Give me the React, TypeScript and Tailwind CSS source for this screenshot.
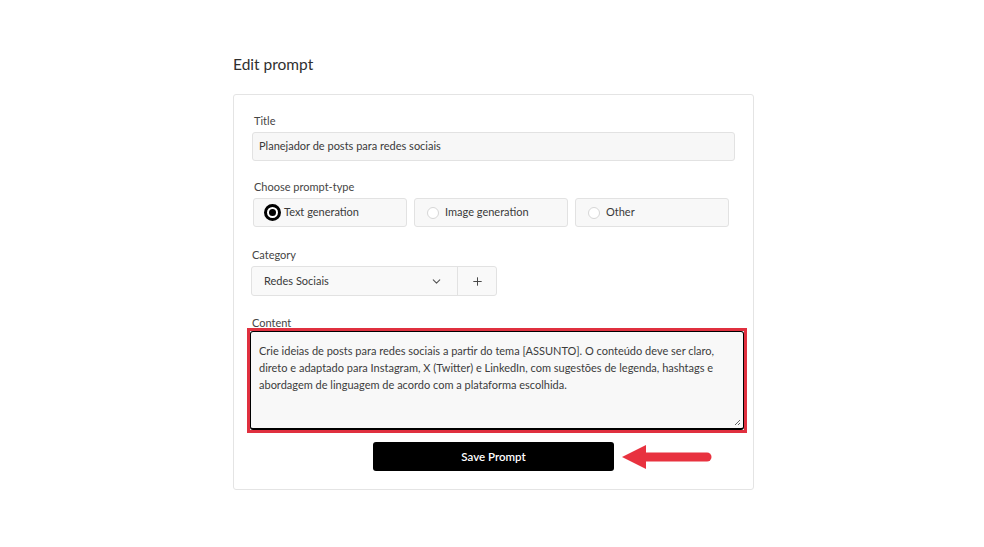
import { ChevronDown, Plus } from 'lucide-react';

const RadioOption = ({ label, selected }: { label: string; selected?: boolean }) => {
  return (
    <div className="flex h-[29px] w-[154px] items-center rounded-[3px] border border-[#e2e2e2] bg-[#f8f8f8] pl-[10px] text-[11px] text-[#3a3a3a]">
      {selected ? (
        <span className="mr-[3px] flex h-[17px] w-[17px] items-center justify-center rounded-full border-[3px] border-black bg-white">
          <span className="h-[7px] w-[7px] rounded-full bg-black" />
        </span>
      ) : (
        <span className="ml-[2px] mr-[6px] h-[12px] w-[12px] rounded-full border border-[#d6d6d6] bg-white" />
      )}
      <span>{label}</span>
    </div>
  );
};

export default function App() {
  return (
    <div className="min-h-[547px] bg-white pt-[54px] font-['Lato','Noto_Sans',sans-serif]">
      <div className="ml-[233px] w-[521px]">
        <h1 className="mb-[19px] text-[15.5px] leading-[21px] text-[#2f2f2f]">Edit prompt</h1>

        <section className="rounded-[3px] border border-[#e4e4e4] bg-white px-[18px] pb-[18px] pt-[18px]">
          <label className="mb-[3px] ml-[2px] block text-[11px] leading-[16px] text-[#454545]">Title</label>
          <div className="flex h-[29px] items-center rounded-[3px] border border-[#e2e2e2] bg-[#f7f7f7] px-[6px] text-[11px] text-[#3a3a3a]">
            Planejador de posts para redes sociais
          </div>

          <label className="mb-[3px] ml-[2px] mt-[18px] block text-[11px] leading-[16px] text-[#454545]">
            Choose prompt-type
          </label>
          <div className="flex gap-[7px] pl-[1px]">
            <RadioOption label="Text generation" selected />
            <RadioOption label="Image generation" />
            <RadioOption label="Other" />
          </div>

          <label className="mb-[3px] mt-[20px] block text-[11px] leading-[16px] text-[#454545]">Category</label>
          <div className="-ml-[1px] flex h-[30px] w-[246px] rounded-[3px] border border-[#e2e2e2] bg-[#f9f9f9]">
            <div className="flex w-[206px] items-center justify-between border-r border-[#e2e2e2] pl-[12px] pr-[14px] text-[11px] text-[#3a3a3a]">
              <span>Redes Sociais</span>
              <ChevronDown className="h-[13px] w-[13px] text-[#555]" strokeWidth={2} />
            </div>
            <div className="flex flex-1 items-center justify-center">
              <Plus className="h-[13px] w-[13px] text-[#444]" strokeWidth={1.8} />
            </div>
          </div>

          <label className="-mb-[3px] mt-[19px] block text-[11px] leading-[16px] text-[#454545]">Content</label>
          <div className="-ml-[5px] w-[500px] border-[3px] border-[#e0303f]">
            <div className="relative h-[99px] rounded-[3px] border border-black border-b-2 bg-[#f8f8f8] px-[8px] pt-[10px] text-[11px] leading-[17px] text-[#3c3c3c]">
              Crie ideias de posts para redes sociais a partir do tema [ASSUNTO]. O conteúdo deve ser claro, direto
              e adaptado para Instagram, X (Twitter) e LinkedIn, com sugestões de legenda, hashtags e abordagem de
              linguagem de acordo com a plataforma escolhida.
              <svg className="absolute bottom-[2px] right-[2px]" width="8" height="8" viewBox="0 0 8 8">
                <path d="M7 2 L2 7 M7 5 L5 7" stroke="#666" strokeWidth="1" />
              </svg>
            </div>
          </div>

          <div className="relative mt-[9px] flex justify-center">
            <button
              type="button"
              className="h-[29px] w-[241px] rounded-[3px] bg-black text-[11.5px] font-semibold text-white"
            >
              Save Prompt
            </button>
            <svg className="absolute left-[370px] top-[2px]" width="92" height="26" viewBox="0 0 92 26">
              <path d="M0 13 L24 1 L24 25 Z" fill="#e8323f" />
              <path d="M22 13 L85 13" stroke="#e8323f" strokeWidth="9" strokeLinecap="round" />
            </svg>
          </div>
        </section>
      </div>
    </div>
  );
}
